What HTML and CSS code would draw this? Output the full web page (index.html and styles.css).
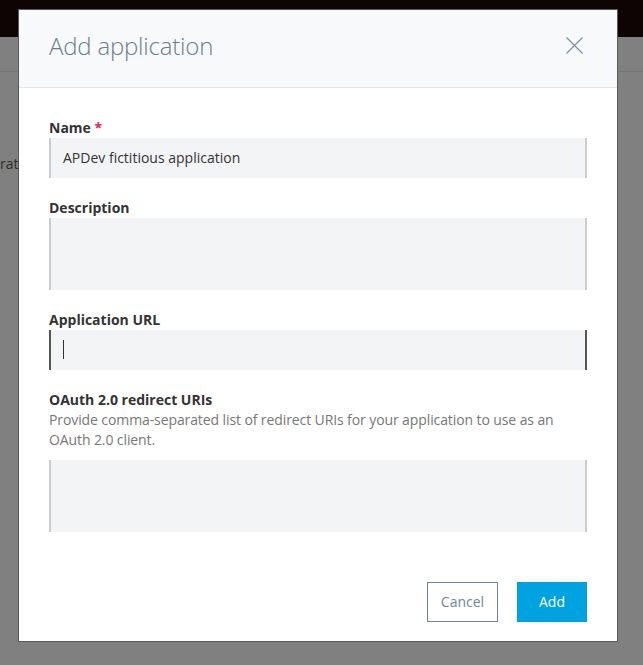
FILE: index.html
```html
<!DOCTYPE html>
<html lang="en">
<head>
<meta charset="utf-8">
<title>Add application</title>
<link rel="stylesheet" href="styles.css">
</head>
<body>
<div class="page">
  <div class="navbar"></div>
  <div class="subheader"></div>
  <div class="page-content"><span class="behind-text">rat</span></div>
</div>

<div class="modal">
  <div class="modal-header">
    <h1 class="modal-title">Add application</h1>
    <button class="close-btn" aria-label="Close">
      <svg width="17" height="17" viewBox="0 0 17 17"><path d="M0.5 0.5 L16.5 16.5 M16.5 0.5 L0.5 16.5" stroke="#7590a0" stroke-width="1.1" fill="none"/></svg>
    </button>
  </div>
  <div class="modal-body">
    <div class="field">
      <div class="label">Name <span class="req">*</span></div>
      <div class="input">APDev fictitious application</div>
    </div>
    <div class="field">
      <div class="label">Description</div>
      <div class="input textarea"></div>
    </div>
    <div class="field">
      <div class="label">Application URL</div>
      <div class="input focused"><span class="caret"></span></div>
    </div>
    <div class="field">
      <div class="label">OAuth 2.0 redirect URIs</div>
      <div class="help">Provide comma-separated list of redirect URIs for your application to use as an OAuth 2.0 client.</div>
      <div class="input textarea"></div>
    </div>
  </div>
  <div class="modal-footer">
    <button class="btn btn-cancel">Cancel</button>
    <button class="btn btn-add">Add</button>
  </div>
</div>
</body>
</html>
```

FILE: styles.css
```css
* { box-sizing: border-box; }
html, body { margin: 0; padding: 0; }
body {
  width: 643px;
  height: 665px;
  overflow: hidden;
  background: #808080;
  font-family: "Open Sans", "Noto Sans", sans-serif;
  position: relative;
}
.page { height: 665px; }
.navbar { height: 37px; background: #0e0404; }
.subheader { height: 35px; border-bottom: 1px solid #777; }
.page-content { padding-top: 82px; }
.behind-text {
  display: block;
  font-size: 14px;
  line-height: 20px;
  color: #2e2e2e;
  margin-left: 0;
}

.modal {
  position: absolute;
  left: 19px;
  top: 10px;
  width: 598px;
  height: 631px;
  background: #fff;
  box-shadow: 0 0 0 1px #585858;
  display: flex;
  flex-direction: column;
}
.modal-header {
  height: 78px;
  background: #f7f9fb;
  border-bottom: 1px solid #e4e5e6;
  display: flex;
  align-items: center;
  justify-content: space-between;
  padding: 0 34px 6px 30px;
}
.modal-title {
  margin: 0;
  font-size: 24px;
  font-weight: 300;
  color: #6b7d8c;
  letter-spacing: -0.2px;
}
.close-btn {
  border: 0;
  background: none;
  padding: 0;
  width: 17px;
  height: 17px;
  display: block;
  cursor: pointer;
}
.close-btn svg { display: block; }

.modal-body {
  padding: 30px 30px 0 30px;
  display: flex;
  flex-direction: column;
  gap: 20px;
}
.label {
  font-size: 14px;
  font-weight: 700;
  line-height: 20px;
  color: #333;
}
.req { color: #e0245a; }
.help {
  font-size: 14px;
  line-height: 20px;
  color: #777;
  margin-bottom: 10px;
  letter-spacing: -0.1px;
}
.input {
  height: 40px;
  background: #f3f4f6;
  border-left: 2px solid #ccc;
  border-right: 2px solid #ccc;
  padding: 0 12px;
  font-size: 14px;
  line-height: 40px;
  color: #333;
  position: relative;
}
.input.textarea { height: 72px; }
.input.focused { border-color: #555; }
.caret {
  position: absolute;
  left: 12px;
  top: 10px;
  width: 1px;
  height: 19px;
  background: #333;
}

.modal-footer {
  margin-top: auto;
  padding: 0 30px 19px 30px;
  display: flex;
  justify-content: flex-end;
  gap: 19px;
}
.btn {
  height: 40px;
  font-family: "Open Sans", "Noto Sans", sans-serif;
  font-size: 14px;
  line-height: 38px;
  padding: 0;
  cursor: pointer;
}
.btn-cancel {
  width: 71px;
  background: #fff;
  border: 1px solid #6b8799;
  color: #6b8799;
}
.btn-add {
  width: 70px;
  background: #00a3e0;
  border: 0;
  color: #fff;
}
```
